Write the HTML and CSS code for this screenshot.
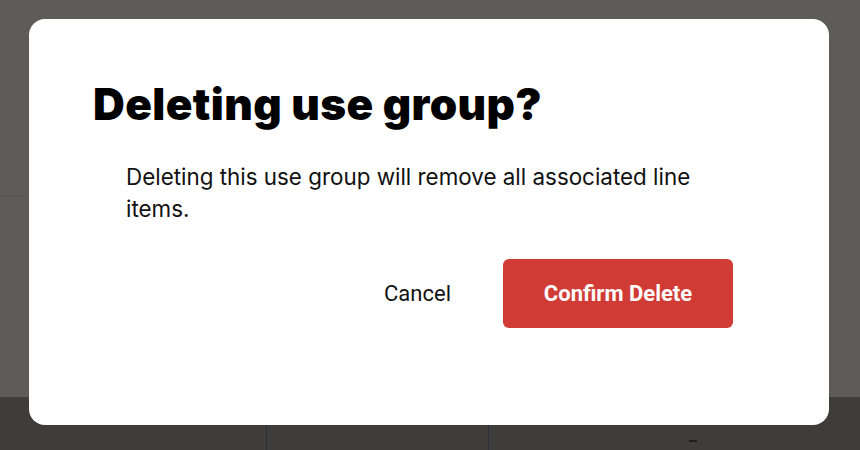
FILE: index.html
```html
<!DOCTYPE html>
<html lang="en">

<head>
    <meta charset="UTF-8">
    <meta name="viewport" content="width=device-width, initial-scale=1.0">
    <title>Delete use group</title>
    <link rel="stylesheet" href="styles.css">
</head>

<body>
    <!-- page behind the overlay -->
    <div class="page">
        <div class="page-head"></div>
        <div class="page-body"></div>
        <div class="page-foot">
            <div class="foot-cell foot-first"></div>
            <div class="foot-cell foot-mid"></div>
            <div class="foot-cell foot-last"><span class="dash"></span></div>
        </div>
    </div>

    <div class="modal">
        <h1 class="modal-title">Deleting use group?</h1>
        <p class="modal-text">Deleting this use group will remove all associated line items.</p>
        <div class="modal-actions">
            <button class="btn-cancel">Cancel</button>
            <button class="btn-confirm">Confirm Delete</button>
        </div>
    </div>
</body>

</html>
```

FILE: styles.css
```css
* {
    margin: 0;
    padding: 0;
    box-sizing: border-box;
}

body {
    width: 860px;
    height: 450px;
    overflow: hidden;
    background-color: #5d5c5a;
    position: relative;
    font-family: "Inter", "Liberation Sans", sans-serif;
}

.page {
    display: flex;
    flex-direction: column;
    height: 450px;
}

.page-head {
    height: 196px;
    border-bottom: 1px solid #545351;
    margin-right: 40px;
}

.page-body {
    flex: 1;
}

.page-foot {
    height: 53px;
    background-color: #3e3d3c;
    display: flex;
}

.foot-cell {
    height: 100%;
}

.foot-first {
    width: 266px;
}

.foot-mid {
    width: 223px;
    border-left: 1px solid #27303b;
    border-right: 1px solid #27303b;
}

.foot-last {
    flex: 1;
    position: relative;
}

.dash {
    position: absolute;
    left: 200px;
    top: 43px;
    width: 8px;
    height: 2px;
    background-color: #1e1e1e;
}

.modal {
    position: absolute;
    left: 29px;
    top: 19px;
    width: 800px;
    height: 406px;
    background-color: #fff;
    border-radius: 16px;
    padding: 59px 96px 0 64px;
}

.modal-title {
    font-size: 44px;
    font-weight: 900;
    line-height: 52px;
    color: #000;
    letter-spacing: 0.4px;
}

.modal-text {
    margin: 31px 0 0 33px;
    font-size: 22.4px;
    line-height: 32px;
    color: #111;
}

.modal-actions {
    display: flex;
    justify-content: flex-end;
    align-items: center;
    gap: 52px;
    margin-top: 34px;
}

.btn-cancel {
    border: none;
    background: none;
    font-family: "Roboto", "Liberation Sans", sans-serif;
    font-size: 22px;
    color: #111;
}

.btn-confirm {
    width: 230px;
    height: 69px;
    border: none;
    border-radius: 6px;
    background-color: #d13b35;
    color: #fff;
    font-family: "Roboto", "Liberation Sans", sans-serif;
    font-size: 22px;
    font-weight: 700;
}
```
